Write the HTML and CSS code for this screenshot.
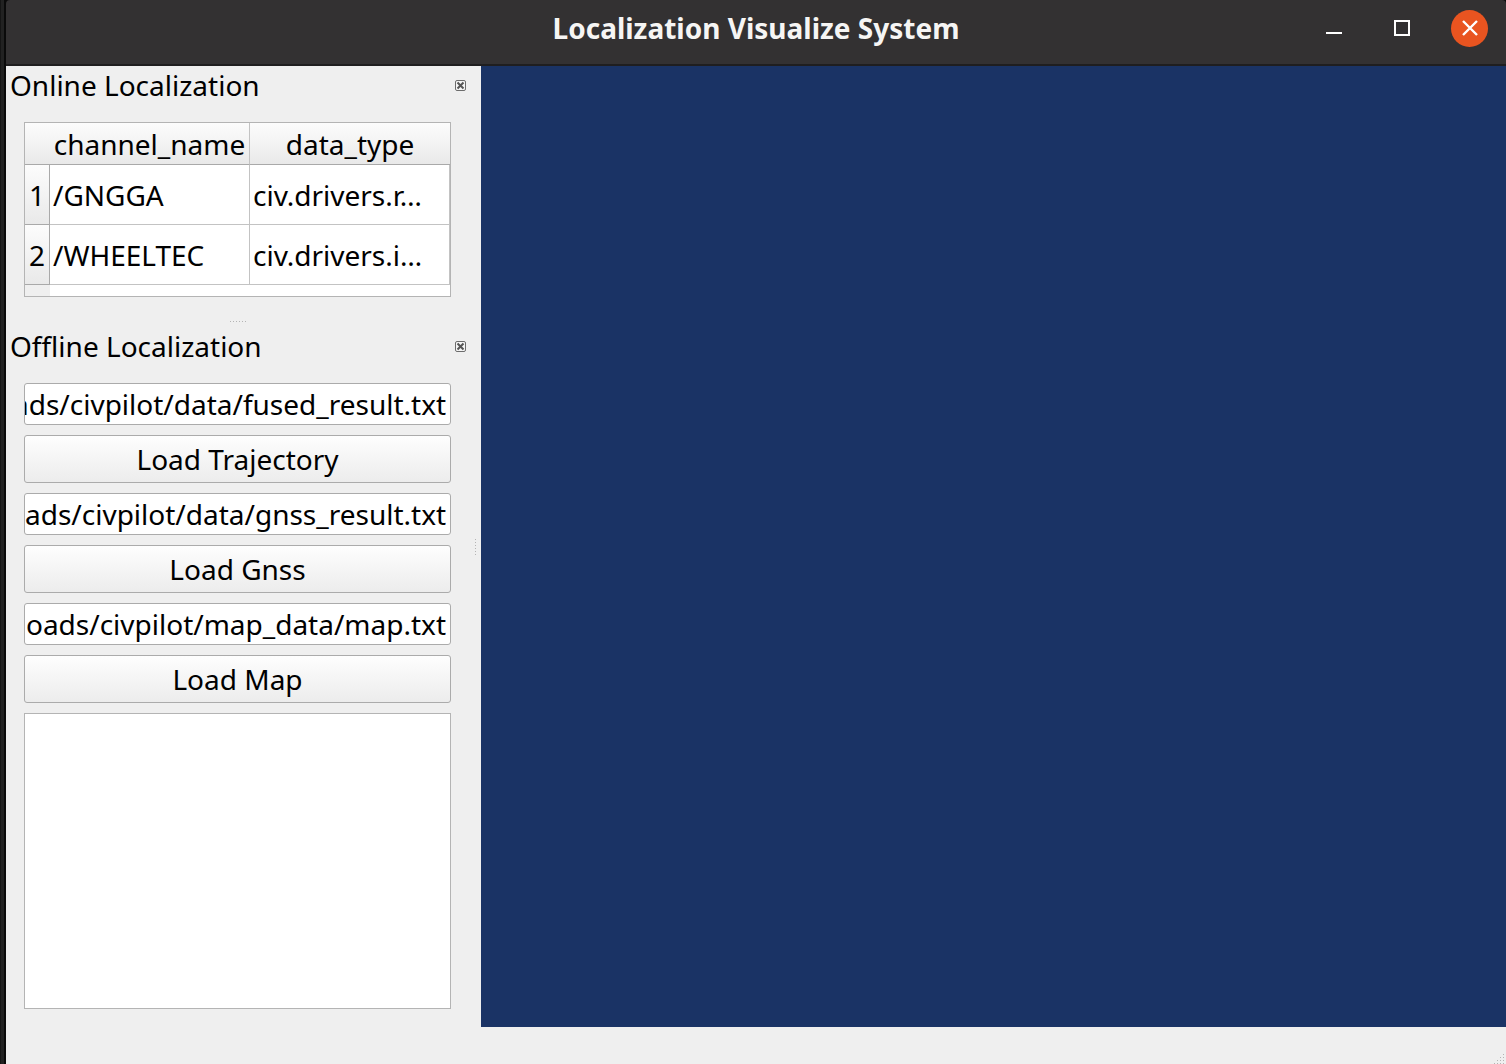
FILE: index.html
```html
<!DOCTYPE html>
<html lang="en">
<head>
<meta charset="utf-8">
<title>Localization Visualize System</title>
<link rel="stylesheet" href="styles.css">
<script src="app.js" defer></script>
</head>
<body>
<div class="window">
  <header class="titlebar">
    <h1 class="window-title">Localization Visualize System</h1>
    <div class="window-controls">
      <button class="window-button" type="button" aria-label="Minimize">
        <svg width="16" height="16" viewBox="0 0 16 16"><path d="M0 12h16v2H0z" fill="#fff"/></svg>
      </button>
      <button class="window-button" type="button" aria-label="Maximize">
        <svg width="16" height="16" viewBox="0 0 16 16"><rect x="1" y="1" width="14" height="14" fill="none" stroke="#fff" stroke-width="2"/></svg>
      </button>
      <button class="window-button window-close" type="button" aria-label="Close">
        <svg width="16" height="16" viewBox="0 0 16 16"><path d="M1 1l14 14M15 1L1 15" fill="none" stroke="#fff" stroke-width="2.4"/></svg>
      </button>
    </div>
  </header>

  <main class="workspace">
    <div class="docks">
      <section class="dock">
        <div class="dock-header">
          <h2 class="dock-title">Online Localization</h2>
          <button class="dock-close" type="button" aria-label="Close Online Localization">
            <svg width="11" height="11" viewBox="0 0 11 11"><rect x=".5" y=".5" width="10" height="10" rx="1.5" fill="#f5f5f5" stroke="#6c6c6c"/><path d="M2.5 2.5l6 6M8.5 2.5l-6 6" stroke="#555" stroke-width="2"/></svg>
          </button>
        </div>
        <div class="dock-body">
          <div class="table-frame">
            <table class="channels">
              <thead>
                <tr><td class="corner"></td><th scope="col">channel_name</th><th scope="col">data_type</th></tr>
              </thead>
              <tbody>
                <tr><th scope="row">1</th><td>/GNGGA</td><td>civ.drivers.r…</td></tr>
                <tr><th scope="row">2</th><td>/WHEELTEC</td><td>civ.drivers.i…</td></tr>
              </tbody>
            </table>
            <div class="table-rest"></div>
          </div>
        </div>
      </section>

      <div class="splitter splitter-row"><span class="grip grip-row"></span></div>

      <section class="dock dock-grow">
        <div class="dock-header">
          <h2 class="dock-title">Offline Localization</h2>
          <button class="dock-close" type="button" aria-label="Close Offline Localization">
            <svg width="11" height="11" viewBox="0 0 11 11"><rect x=".5" y=".5" width="10" height="10" rx="1.5" fill="#f5f5f5" stroke="#6c6c6c"/><path d="M2.5 2.5l6 6M8.5 2.5l-6 6" stroke="#555" stroke-width="2"/></svg>
          </button>
        </div>
        <form class="dock-body loader">
          <input class="path" type="text" aria-label="Trajectory file" value="ads/civpilot/data/fused_result.txt">
          <button class="load" type="button">Load Trajectory</button>
          <input class="path" type="text" aria-label="Gnss file" value="ads/civpilot/data/gnss_result.txt">
          <button class="load" type="button">Load Gnss</button>
          <input class="path" type="text" aria-label="Map file" value="oads/civpilot/map_data/map.txt">
          <button class="load" type="button">Load Map</button>
          <textarea class="log" aria-label="Log" readonly></textarea>
        </form>
      </section>
    </div>
    <div class="splitter splitter-column"><span class="grip grip-column"></span></div>
    <div class="viewport"></div>
  </main>

  <footer class="statusbar">
    <svg width="13" height="13" viewBox="0 0 13 13" fill="#b4b4b4"><path d="M10 3h1v1h-1zM7 6h1v1H7zM10 6h1v1h-1zM4 9h1v1H4zM7 9h1v1H7zM10 9h1v1h-1zM1 12h1v1H1zM4 12h1v1H4zM7 12h1v1H7zM10 12h1v1h-1z"/></svg>
  </footer>
</div>
</body>
</html>
```
FILE: styles.css
```css
* {
  box-sizing: border-box;
}

body {
  margin: 0;
  padding-left: 6px;
  background: linear-gradient(to right, #151515 1px, #222 1px, #222 4px, #0a0a0a 4px);
  color: #000;
  font: 28px/38px "Noto Sans", "Open Sans", sans-serif;
}

button,
input,
textarea {
  margin: 0;
  padding: 0;
  border: 0;
  color: inherit;
  font: inherit;
}

.window {
  display: flex;
  flex-direction: column;
  min-height: 100vh;
}

.titlebar {
  display: grid;
  grid-template-columns: 1fr auto 1fr;
  align-items: center;
  height: 66px;
  padding-bottom: 8px;
  border-bottom: 2px solid #1f1e1f;
  border-radius: 4px 4px 0 0;
  background: #333132;
}

.window-title {
  grid-column: 2;
  margin: 0;
  color: #f6f5f4;
  font-size: 28px;
  font-weight: 700;
}

.window-controls {
  display: flex;
  justify-content: flex-end;
  gap: 31px;
  padding-right: 18px;
}

.window-button {
  display: grid;
  place-items: center;
  width: 37px;
  height: 37px;
  border-radius: 50%;
  background: none;
}

.window-close {
  background: #e95420;
}

.workspace {
  display: flex;
  flex: 1;
  background: #efefef;
}

.docks {
  display: flex;
  flex-direction: column;
  width: 463px;
}

.dock-grow {
  display: flex;
  flex: 1;
  flex-direction: column;
}

.dock-header {
  display: flex;
  align-items: center;
  justify-content: space-between;
  height: 38px;
  padding: 0 3px 0 4px;
}

.dock-title {
  margin: 0;
  font-size: 28px;
  font-weight: 400;
}

.dock-close {
  display: flex;
  background: none;
}

.dock-body {
  padding: 18px;
}

.table-frame {
  border: 1px solid #b4b4b4;
  background: #fff;
}

.channels {
  width: 100%;
  border-collapse: separate;
  border-spacing: 0;
  table-layout: fixed;
}

.channels th,
.channels td {
  padding: 0;
  border: 0 solid #c3c3c3;
  border-width: 0 1px 1px 0;
  font-weight: 400;
  white-space: nowrap;
}

.channels thead th,
.channels .corner {
  height: 42px;
  border-bottom-color: #a9a9a9;
  background: linear-gradient(#fcfcfc, #f3f3f3 50%, #e9e9e9);
}

.channels thead th:nth-child(2) {
  width: 200px;
}

.channels thead th:last-child {
  border-right: 0;
}

.channels .corner {
  width: 25px;
  border-right: 0;
}

.channels tbody th {
  height: 60px;
  border-color: #a9a9a9;
  background: linear-gradient(#fcfcfc, #f3f3f3 50%, #e9e9e9);
}

.channels tbody td {
  padding-left: 3px;
}

.table-rest {
  width: 25px;
  height: 11px;
  background: #efefef;
}

.splitter {
  display: flex;
  align-items: center;
  justify-content: center;
}

.splitter-row {
  height: 12px;
}

.splitter-column {
  width: 12px;
}

.grip-row {
  width: 16px;
  height: 1px;
  background: repeating-linear-gradient(to right, #b4b4b4 0 1px, transparent 1px 3px);
}

.grip-column {
  width: 1px;
  height: 16px;
  background: repeating-linear-gradient(#b4b4b4 0 1px, transparent 1px 3px);
}

.loader {
  display: flex;
  flex: 1;
  flex-direction: column;
  gap: 10px;
}

.path {
  width: 100%;
  height: 42px;
  padding-right: 4px;
  border: 1px solid #ababab;
  border-radius: 3px;
  background: #fff;
  text-align: right;
}

.load {
  height: 48px;
  border: 1px solid #ababab;
  border-radius: 3px;
  background: linear-gradient(#fefefe, #ececec);
}

.log {
  flex: 1;
  min-height: 80px;
  border: 1px solid #b4b4b4;
  background: #fff;
  resize: none;
}

.viewport {
  flex: 1;
  background: #1a3365;
}

.statusbar {
  display: flex;
  align-items: flex-end;
  justify-content: flex-end;
  height: 37px;
  background: #efefef;
}
```
FILE: app.js
```js
// Keep the file name at the end of each path in view.
for (const path of document.querySelectorAll('.path')) {
  path.scrollLeft = path.scrollWidth;
}
```
